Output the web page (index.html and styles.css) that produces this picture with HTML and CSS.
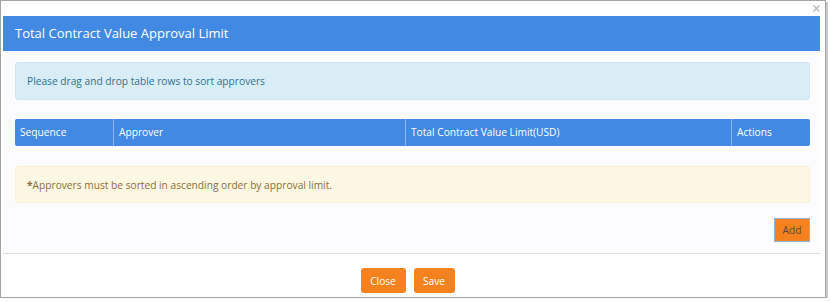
FILE: index.html
```html
<!DOCTYPE html>
<html>
<head>
<meta charset="utf-8">
<link rel="stylesheet" href="styles.css">
</head>
<body>
<div class="window">
  <svg class="close-x" width="7" height="7" viewBox="0 0 7 7" aria-label="close"><path d="M0.5 0.5L6.5 6.5M6.5 0.5L0.5 6.5" stroke="#b4b4b4" stroke-width="1.2" fill="none"/></svg>
  <div class="panel">
    <div class="panel-head">Total Contract Value Approval Limit</div>
    <div class="panel-body">
      <div class="alert info">Please drag and drop table rows to sort approvers</div>
      <div class="thead">
        <div class="th c1">Sequence</div>
        <div class="th c2">Approver</div>
        <div class="th c3">Total Contract Value Limit(USD)</div>
        <div class="th c4">Actions</div>
      </div>
      <div class="alert warn"><b>*</b>Approvers must be sorted in ascending order by approval limit.</div>
      <div class="add-row"><button class="btn add">Add</button></div>
    </div>
  </div>
  <div class="footer">
    <button class="btn orange close-btn">Close</button>
    <button class="btn orange save-btn">Save</button>
  </div>
</div>
</body>
</html>
```

FILE: styles.css
```css
html, body {
  margin: 0;
  padding: 0;
  background: #ffffff;
  font-family: "Open Sans", "Noto Sans", sans-serif;
}
.window {
  position: relative;
  box-sizing: border-box;
  width: 826px;
  height: 298px;
  border: 1px solid #a3a3a3;
  box-shadow: 2px 2px 0 #c9c9c9;
  background: #fff;
  padding: 15px 5px 0 2px;
}
.close-x {
  position: absolute;
  top: 4px;
  right: 5px;
  display: block;
}
.panel {
  background: #fcfbfe;
  border-bottom: 1px solid #dedede;
}
.panel-head {
  height: 35px;
  box-sizing: border-box;
  background: #4289e4;
  color: #fff;
  font-size: 13px;
  line-height: 35px;
  padding-left: 12px;
}
.panel-body {
  padding: 11px 10px 11px 12px;
}
.alert {
  height: 38px;
  box-sizing: border-box;
  border-radius: 3px;
  font-size: 10.2px;
  line-height: 36px;
  padding-left: 11px;
}
.info {
  background: #d9edf7;
  border: 1px solid #cfe7f3;
  color: #31708f;
}
.thead {
  margin-top: 19px;
  display: flex;
  height: 27px;
  background: #4289e4;
  border-radius: 2px;
}
.th {
  color: #fff;
  font-size: 10.2px;
  line-height: 27px;
  padding-left: 5px;
  box-sizing: border-box;
  border-left: 1px solid #8db6ee;
}
.c1 { width: 98px; border-left: none; }
.c2 { width: 292px; }
.c3 { width: 326px; }
.c4 { flex: 1; }
.warn {
  margin-top: 20px;
  height: 37px;
  background: #fcf8e3;
  border: 1px solid #faf0d4;
  color: #8a6d3b;
}
.warn b { font-weight: 700; }
.add-row {
  display: flex;
  justify-content: flex-end;
  margin-top: 15px;
}
.btn {
  font-family: "Open Sans", "Noto Sans", sans-serif;
  font-size: 10.2px;
  cursor: pointer;
}
.add {
  width: 36px;
  height: 24px;
  padding: 0;
  background: #f5821f;
  border: 1px solid #8fb2e8;
  color: #5a4a3a;
  border-radius: 0;
}
.footer {
  display: flex;
  justify-content: center;
  gap: 8px;
  padding-top: 14px;
  margin-right: 8px;
}
.orange {
  height: 25px;
  padding: 0;
  background: #f5821f;
  border: none;
  color: #fff;
  border-radius: 3px;
}
.close-btn { width: 45px; }
.save-btn { width: 41px; }
```
